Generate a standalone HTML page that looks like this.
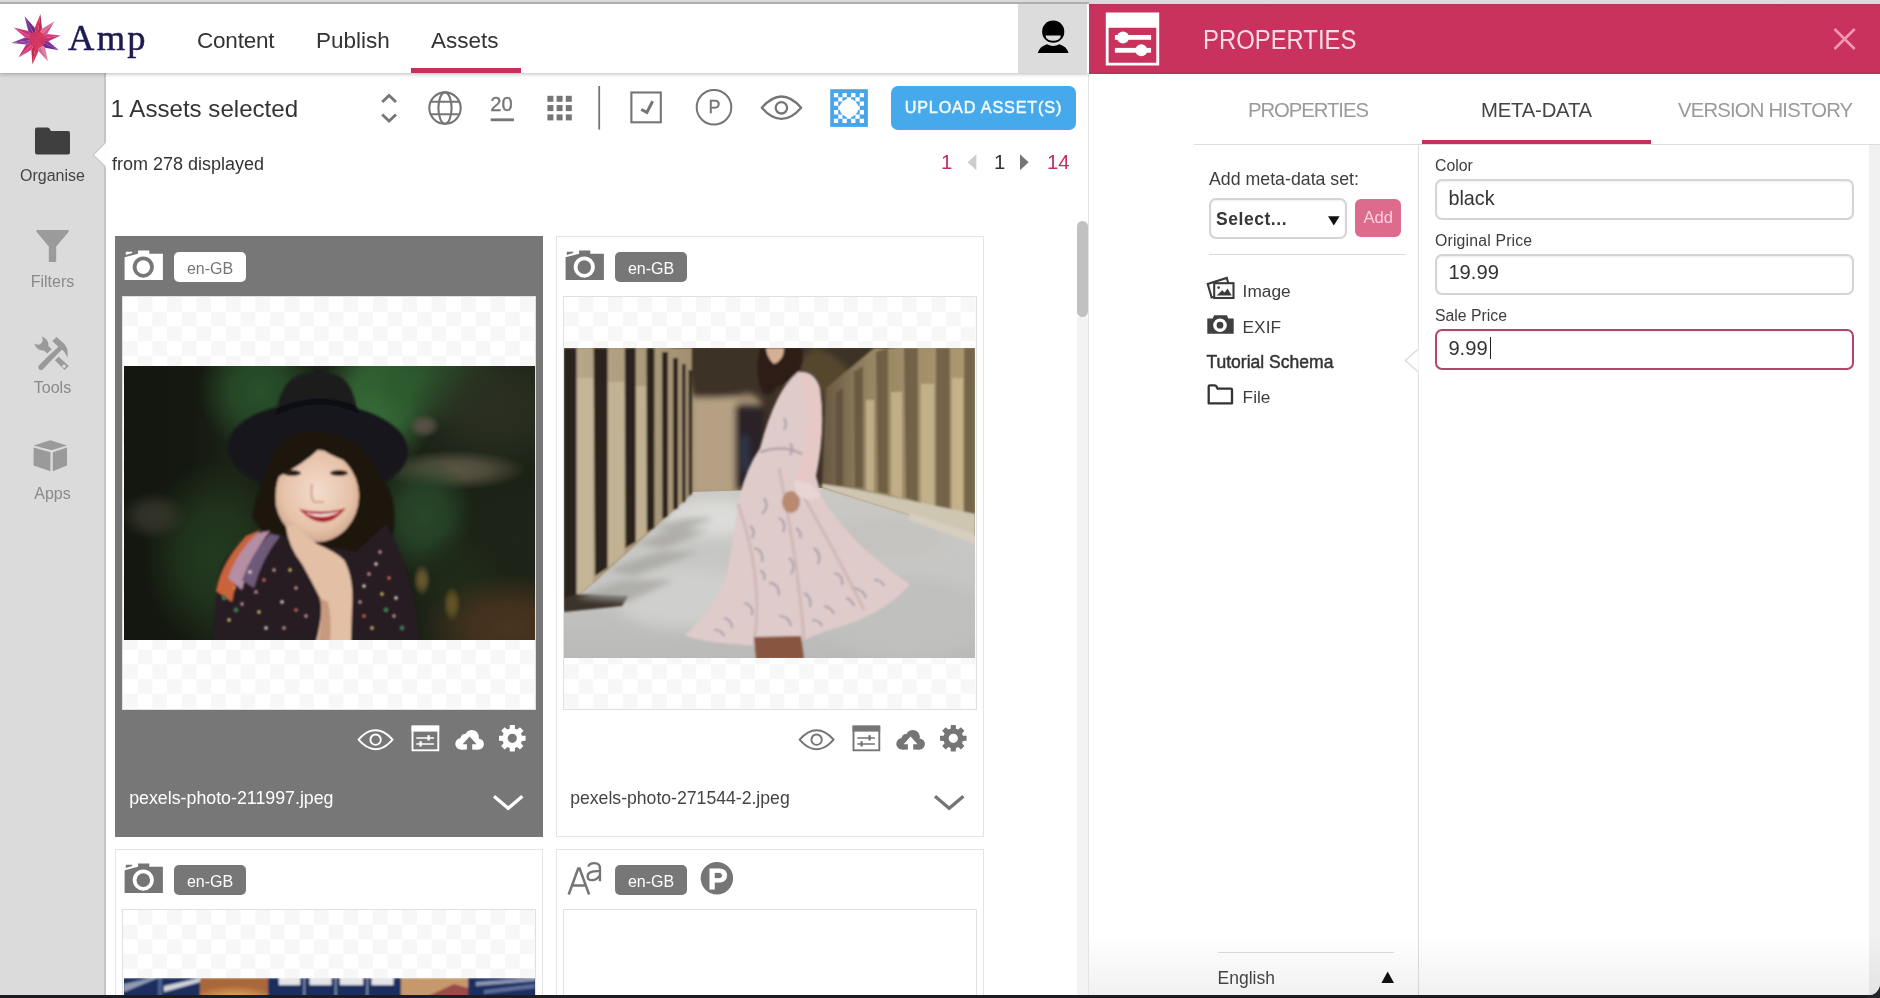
<!DOCTYPE html>
<html>
<head>
<meta charset="utf-8">
<title>Amp - Assets</title>
<style>
*{box-sizing:border-box;margin:0;padding:0}
html,body{width:1880px;height:998px;overflow:hidden;background:#fff}
body{font-family:"Liberation Sans",sans-serif;color:#333;position:relative}
#hdr,#sb,#tb,#cards,#pp{will-change:transform}
.abs{position:absolute}
.t{position:absolute;white-space:nowrap;line-height:1}
svg{position:absolute;overflow:visible}
/* top strip */
#topstrip{left:0;top:0;width:1880px;height:3.6px;background:#dadada;z-index:20}
#topline{left:0;top:2px;width:1089px;height:1.6px;background:#adadb1;z-index:21}
/* header */
#header{left:0;top:4px;width:1089px;height:69px;background:#fff;box-shadow:0 1px 4px rgba(0,0,0,.28);z-index:5}
#userbox{left:1018px;top:4px;width:68.6px;height:69px;background:#dddcdd;z-index:6}
#navline{left:411px;top:68px;width:110px;height:5px;background:#c7305b;z-index:7}
/* sidebar */
#sidebar{left:0;top:73px;width:106px;height:925px;background:#dcdbdc;border-right:2px solid #c4c4c6;box-shadow:1px 0 0 #ececec}
.sblabel{font-size:16px;color:#8a8a8a;text-align:center;width:105px;left:0}
/* main */
#main{left:106px;top:73px;width:983px;height:925px;background:#fff}
/* properties */
#phead{left:1088.6px;top:3.5px;width:792px;height:70px;background:linear-gradient(to bottom,#a93a5e 0,#c8325c 2.5px,#c8325c 67px,#b93159 70px);z-index:6}
#ppanel{left:1088.2px;top:74px;width:792px;height:924px;background:#fff;border-left:1.8px solid #e3e3e3}
/* bottom strip */
#botstrip{left:0;top:995px;width:1880px;height:3px;background:#1c1c22;z-index:50}
.card{position:absolute;width:428px;height:601px;overflow:hidden;background:#fff;border:1px solid #e4e4e4}
.card.sel{background:#777;border-color:#777}
.thumb{position:absolute;left:6px;top:59px;width:414px;height:414px;border:1px solid #e0e0e0;
 background-color:#fff;
 background-image:linear-gradient(45deg,#f7f7f7 25%,transparent 25%,transparent 75%,#f7f7f7 75%),linear-gradient(45deg,#f7f7f7 25%,transparent 25%,transparent 75%,#f7f7f7 75%);
 background-size:29.4px 29.4px;background-position:0 0,14.7px 14.7px}
.badge{position:absolute;height:29.6px;border-radius:5px;font-size:16px;line-height:33.6px;overflow:hidden;text-align:center;width:71.8px}
.inp{position:absolute;left:1435px;width:419px;height:41px;border:2px solid #d4d4d4;border-radius:7px;background:#fff;box-shadow:inset 0 1px 2px rgba(0,0,0,.08)}
</style>
</head>
<body>
<div id="topstrip" class="abs"></div><div id="topline" class="abs"></div>
<div id="sidebar" class="abs"></div>
<div id="main" class="abs"></div>
<div id="header" class="abs"></div>
<div id="userbox" class="abs"></div>
<div id="navline" class="abs"></div>
<div id="phead" class="abs"></div>
<div id="ppanel" class="abs"></div>

<!-- HEADER CONTENT -->
<div id="hdr" class="abs" style="left:0;top:0;z-index:10">
<svg width="80" height="74" style="left:0;top:0">
<polygon points="13.6,27.5 25.1,37.4 36.7,39.4" fill="#e03c80"/>
<polygon points="13.6,27.5 28.3,31.1 36.7,39.4" fill="#c53470"/>
<polygon points="24.5,16.3 28.3,31.1 36.7,39.4" fill="#7b2f98"/>
<polygon points="24.5,16.3 34.7,27.8 36.7,39.4" fill="#6c2985"/>
<polygon points="40.5,14.1 34.7,27.8 36.7,39.4" fill="#d6325e"/>
<polygon points="40.5,14.1 42.0,28.8 36.7,39.4" fill="#bc2c52"/>
<polygon points="54.3,21.5 42.0,28.8 36.7,39.4" fill="#e4669a"/>
<polygon points="54.3,21.5 47.2,34.0 36.7,39.4" fill="#c85987"/>
<polygon points="60.7,35.6 47.2,34.0 36.7,39.4" fill="#e03a7e"/>
<polygon points="60.7,35.6 48.4,41.2 36.7,39.4" fill="#c5336e"/>
<polygon points="58.8,50.3 48.4,41.2 36.7,39.4" fill="#7f2e9b"/>
<polygon points="58.8,50.3 45.1,47.7 36.7,39.4" fill="#6f2888"/>
<polygon points="47.9,61.2 45.1,47.7 36.7,39.4" fill="#e77aa6"/>
<polygon points="47.9,61.2 38.5,51.1 36.7,39.4" fill="#cb6b92"/>
<polygon points="32.5,64.4 38.5,51.1 36.7,39.4" fill="#d8325c"/>
<polygon points="32.5,64.4 31.3,49.9 36.7,39.4" fill="#be2c50"/>
<polygon points="18.4,57.4 31.3,49.9 36.7,39.4" fill="#e23b7f"/>
<polygon points="18.4,57.4 26.1,44.6 36.7,39.4" fill="#c6336f"/>
<polygon points="11.4,42.9 26.1,44.6 36.7,39.4" fill="#9240a6"/>
<polygon points="11.4,42.9 25.1,37.4 36.7,39.4" fill="#803892"/>
<circle cx="37.2" cy="39.6" r="8.2" fill="#d5335c" opacity=".9"/>
</svg>
<svg width="71" height="70" style="left:1018px;top:4px" viewBox="1018 4 71 70">
<circle cx="1053.2" cy="31.7" r="11.1" fill="#000"/>
<path d="M1045.5,35.5 A7.7,5.3 0 0 0 1060.9,35.5 Z" fill="#dddcdd"/>
<path d="M1037.7,53 Q1039.5,46.5 1047,44.2 Q1053.2,47.6 1059.4,44.2 Q1066.9,46.5 1068.5,53 Z" fill="#000"/>
</svg>
<svg width="60" height="60" style="left:1100px;top:8px" viewBox="1100 8 60 60">
<path fill-rule="evenodd" fill="#fff" d="M1105.8,12.5 H1159.2 V65.5 H1105.8 Z M1108.6,27.7 V62.7 H1156.3 V27.7 Z"/>
<rect x="1114.9" y="35" width="36.2" height="4.8" fill="#fff"/>
<circle cx="1123" cy="37.4" r="6" fill="#fff"/>
<rect x="1114.9" y="47.9" width="36.2" height="4.8" fill="#fff"/>
<circle cx="1141.3" cy="50.3" r="6" fill="#fff"/>
</svg>
<svg width="30" height="30" style="left:1830px;top:24px" viewBox="1830 24 30 30">
<path d="M1834.5,29 L1854.7,49 M1854.7,29 L1834.5,49" stroke="#f497b4" stroke-width="2.6" fill="none"/>
</svg>
<div class="t" style="left:68px;top:20px;font-family:'Liberation Serif',serif;font-size:36.5px;letter-spacing:2.3px;color:#1d1b50;-webkit-text-stroke:0.5px #1d1b50">Amp</div>
<div class="t" style="left:197px;top:30px;font-size:22.5px;letter-spacing:-0.2px;color:#333">Content</div>
<div class="t" style="left:316px;top:30px;font-size:22.5px;color:#333">Publish</div>
<div class="t" style="left:431px;top:30px;font-size:22.5px;color:#333">Assets</div>
<div class="t" style="left:1203px;top:27.3px;font-size:27px;color:#f6dde5;transform:scaleX(0.884);transform-origin:0 0">PROPERTIES</div>
</div>

<!-- SIDEBAR CONTENT -->
<div id="sb" class="abs" style="left:0;top:0;z-index:4">
<svg width="106" height="440" style="left:0;top:110px" viewBox="0 110 106 440">
<!-- folder -->
<path d="M37,127.6 H47.5 Q49.3,127.6 50,129.2 L50.8,131 H68 Q70,131 70,133 V152.6 Q70,154.6 68,154.6 H37 Q35,154.6 35,152.6 V129.6 Q35,127.6 37,127.6 Z" fill="#3f3f3f"/>
<!-- notch -->
<polygon points="106.5,141.5 93.3,154.8 106.5,168" fill="#fff" stroke="#c8c8ca" stroke-width="1.2"/><rect x="105.8" y="141" width="2" height="28" fill="#fff"/>
<!-- funnel -->
<path d="M37.8,230 H67.4 Q70,230 68.3,232.2 L56.2,246.5 V262 H48.8 V246.5 L36.8,232.2 Q35.2,230 37.8,230 Z" fill="#9b9b9b"/>
<!-- tools -->
<g fill="#9a9a9a">
<path d="M41.6,336.3 Q49.2,339.4 48.4,346 L51.6,349.2 L47.2,353.6 L44,350.4 Q37.2,351.4 34.2,343.6 Q38.4,346 41.2,343.2 Q44,340.4 41.6,336.3 Z"/>
<polygon points="54.9,360.2 58.7,356.7 68.8,366 64.5,370"/>
<path d="M39,365.2 L47.5,356.8 L59.8,345.6 L63,348.6 L51.6,360.2 L43,369.2 Q40.8,371 39,369.2 Q37.2,367.2 39,365.2 Z"/>
<path d="M52.3,341 L56.6,336.9 L62.5,342.2 Q69.5,347.5 67.2,358 Q65.6,352.2 61.8,349.6 L58,346.6 Z"/>
</g>
<circle cx="64" cy="366.2" r="1.7" fill="#dcdbdc"/>
<!-- cube -->
<g fill="#9a9a9a">
<polygon points="50.2,440.3 67,445.4 51.6,450.2 33.6,445.4"/>
<polygon points="33.6,447.4 50.4,452.2 50.4,471.2 33.6,465.4"/>
<polygon points="52.8,452.2 67,447.4 67,465.4 52.8,471.2"/>
</g>
</svg>
<div class="t sblabel" style="top:168px;color:#444">Organise</div>
<div class="t sblabel" style="top:273.5px">Filters</div>
<div class="t sblabel" style="top:379.5px">Tools</div>
<div class="t sblabel" style="top:485.5px">Apps</div>
</div>

<!-- MAIN TOOLBAR -->
<div id="tb" class="abs" style="left:0;top:0;z-index:3">
<div class="t" style="left:110.6px;top:97px;font-size:24.1px;color:#333">1 Assets selected</div>
<div class="t" style="left:112px;top:155.2px;font-size:18px;color:#333">from 278 displayed</div>
<svg width="520" height="60" style="left:370px;top:80px" viewBox="370 80 520 60">
<g fill="none" stroke="#757575">
<path d="M382.2,101.9 L389.1,95.4 L396,101.9" stroke-width="2.8"/>
<path d="M382.2,114.5 L389.1,121 L396,114.5" stroke-width="2.8"/>
<circle cx="445" cy="108.1" r="15.7" stroke-width="2.1"/>
<ellipse cx="445" cy="108.1" rx="6.6" ry="15.7" stroke-width="2.1"/>
<path d="M431,101.8 H459 M431,114.2 H459" stroke-width="2.1"/>
<rect x="631.4" y="92.5" width="29.4" height="29.8" stroke-width="2.1"/>
<path d="M641.3,109.5 L646.9,112.4 L652.6,101.2" stroke-width="3"/>
<circle cx="714" cy="107.2" r="17.3" stroke-width="2"/>
<path d="M761.8,107.7 C769,99.5 775.5,96.5 781.5,96.5 C787.5,96.5 794,99.5 801.2,107.7 C794,115.9 787.5,118.9 781.5,118.9 C775.5,118.9 769,115.9 761.8,107.7 Z" stroke-width="2.3" stroke-linejoin="round"/>
<circle cx="781.4" cy="107.8" r="5.7" stroke-width="2.3"/>
</g>
<g fill="#757575">
<rect x="490.7" y="118.4" width="23.2" height="2.8"/>
<rect x="547.4" y="95.8" width="6" height="6"/><rect x="556.6" y="95.8" width="6" height="6"/><rect x="565.8" y="95.8" width="6" height="6"/>
<rect x="547.4" y="105.1" width="6" height="6"/><rect x="556.6" y="105.1" width="6" height="6"/><rect x="565.8" y="105.1" width="6" height="6"/>
<rect x="547.4" y="114.4" width="6" height="6"/><rect x="556.6" y="114.4" width="6" height="6"/><rect x="565.8" y="114.4" width="6" height="6"/>
<rect x="598.3" y="86" width="1.8" height="43.6"/>
</g>
<rect x="830.2" y="89.2" width="37.7" height="37.7" fill="#47a5e8"/>
<path d="M833.9,92.9h4.3v4.3h-4.3zM842.5,92.9h4.3v4.3h-4.3zM851.1,92.9h4.3v4.3h-4.3zM859.7,92.9h4.3v4.3h-4.3zM838.2,97.2h4.3v4.3h-4.3zM846.8,97.2h4.3v4.3h-4.3zM855.4,97.2h4.3v4.3h-4.3zM833.9,101.5h4.3v4.3h-4.3zM842.5,101.5h4.3v4.3h-4.3zM851.1,101.5h4.3v4.3h-4.3zM859.7,101.5h4.3v4.3h-4.3zM838.2,105.8h4.3v4.3h-4.3zM846.8,105.8h4.3v4.3h-4.3zM855.4,105.8h4.3v4.3h-4.3zM833.9,110.1h4.3v4.3h-4.3zM842.5,110.1h4.3v4.3h-4.3zM851.1,110.1h4.3v4.3h-4.3zM859.7,110.1h4.3v4.3h-4.3zM838.2,114.4h4.3v4.3h-4.3zM846.8,114.4h4.3v4.3h-4.3zM855.4,114.4h4.3v4.3h-4.3zM833.9,118.7h4.3v4.3h-4.3zM842.5,118.7h4.3v4.3h-4.3zM851.1,118.7h4.3v4.3h-4.3zM859.7,118.7h4.3v4.3h-4.3z" fill="#fff"/>
<circle cx="849" cy="108" r="9.3" fill="#fff"/>
</svg>
<div class="t" style="left:490.2px;top:93.5px;font-size:20.2px;color:#757575;-webkit-text-stroke:0.35px #757575">20</div>
<div class="t" style="left:708.4px;top:98.4px;font-size:18px;color:#757575;-webkit-text-stroke:0.3px #757575">P</div>
<div class="t" style="left:940.9px;top:152.3px;font-size:20.4px;color:#c4305c">1</div>
<div class="t" style="left:993.9px;top:152.3px;font-size:20.4px;color:#333">1</div>
<div class="t" style="left:1046.8999999999999px;top:152.3px;font-size:20.4px;color:#c4305c">14</div>
<svg width="70" height="20" style="left:965px;top:152px" viewBox="965 152 70 20"><polygon points="967.6,162.2 976.4,154.2 976.4,170.2" fill="#cdcdcd"/><polygon points="1028.6,162.2 1020,154.2 1020,170.2" fill="#757575"/></svg>
<div class="abs" style="left:1077px;top:317px;width:11px;height:680px;background:#f3f3f3"></div>
<div class="abs" style="left:1077px;top:221px;width:10.6px;height:96px;border-radius:5.3px;background:#c1c1c1"></div>
<div class="abs" style="left:891px;top:86px;width:185.2px;height:44px;background:#45a9ec;border-radius:7px"></div>
<div class="t" style="left:890px;top:99px;width:186px;text-align:center;font-size:16.2px;font-weight:normal;-webkit-text-stroke:0.5px #f4fbff;letter-spacing:0.85px;text-indent:0.85px;color:#f4fbff">UPLOAD ASSET(S)</div>
</div>

<!-- CARDS -->
<div id="cards" class="abs" style="left:0;top:0;z-index:2">
<div class="card sel" style="left:115px;top:236px;height:600.5px">
<div class="thumb"></div>
<svg width="411" height="274" viewBox="0 0 411 274" style="left:7.5px;top:128.7px;overflow:hidden">
<defs>
<filter id="b1" x="-20%" y="-20%" width="140%" height="140%"><feGaussianBlur stdDeviation="11"/></filter>
<filter id="b2" x="-20%" y="-20%" width="140%" height="140%"><feGaussianBlur stdDeviation="1.3"/></filter>
<filter id="b3" x="-20%" y="-20%" width="140%" height="140%"><feGaussianBlur stdDeviation="0.8"/></filter>
<filter id="b4" x="-20%" y="-20%" width="140%" height="140%"><feGaussianBlur stdDeviation="4"/></filter>
<clipPath id="c1"><rect width="411" height="274"/></clipPath>
<radialGradient id="sk" cx="0.5" cy="0.45" r="0.6"><stop offset="0" stop-color="#f4dccd"/><stop offset="0.7" stop-color="#e5c1a8"/><stop offset="1" stop-color="#c99f86"/></radialGradient>
<linearGradient id="lg0" x1="0" y1="0" x2="1" y2="0"><stop offset="0" stop-color="#14170f"/><stop offset="0.6" stop-color="#14170f" stop-opacity=".9"/><stop offset="1" stop-color="#14170f" stop-opacity="0"/></linearGradient>
<radialGradient id="rg0"><stop offset="0" stop-color="#22391f"/><stop offset="0.45" stop-color="#22391f" stop-opacity=".8"/><stop offset="1" stop-color="#22391f" stop-opacity="0"/></radialGradient>
<radialGradient id="rg1"><stop offset="0" stop-color="#28502a"/><stop offset="0.45" stop-color="#28502a" stop-opacity=".8"/><stop offset="1" stop-color="#28502a" stop-opacity="0"/></radialGradient>
<radialGradient id="rg2"><stop offset="0" stop-color="#38703a"/><stop offset="0.45" stop-color="#38703a" stop-opacity=".8"/><stop offset="1" stop-color="#38703a" stop-opacity="0"/></radialGradient>
<radialGradient id="rg3"><stop offset="0" stop-color="#2c5a2e"/><stop offset="0.45" stop-color="#2c5a2e" stop-opacity=".8"/><stop offset="1" stop-color="#2c5a2e" stop-opacity="0"/></radialGradient>
<radialGradient id="rg4"><stop offset="0" stop-color="#2a2f21"/><stop offset="0.45" stop-color="#2a2f21" stop-opacity=".8"/><stop offset="1" stop-color="#2a2f21" stop-opacity="0"/></radialGradient>
<radialGradient id="rg5"><stop offset="0" stop-color="#5c5644"/><stop offset="0.45" stop-color="#5c5644" stop-opacity=".8"/><stop offset="1" stop-color="#5c5644" stop-opacity="0"/></radialGradient>
<radialGradient id="rg6"><stop offset="0" stop-color="#27472a"/><stop offset="0.45" stop-color="#27472a" stop-opacity=".8"/><stop offset="1" stop-color="#27472a" stop-opacity="0"/></radialGradient>
<radialGradient id="rg7"><stop offset="0" stop-color="#1e2418"/><stop offset="0.45" stop-color="#1e2418" stop-opacity=".8"/><stop offset="1" stop-color="#1e2418" stop-opacity="0"/></radialGradient>
<radialGradient id="rg8"><stop offset="0" stop-color="#1f2a18"/><stop offset="0.45" stop-color="#1f2a18" stop-opacity=".8"/><stop offset="1" stop-color="#1f2a18" stop-opacity="0"/></radialGradient>
<radialGradient id="rg9"><stop offset="0" stop-color="#4a341f"/><stop offset="0.45" stop-color="#4a341f" stop-opacity=".8"/><stop offset="1" stop-color="#4a341f" stop-opacity="0"/></radialGradient>
<radialGradient id="rg10"><stop offset="0" stop-color="#34352a"/><stop offset="0.45" stop-color="#34352a" stop-opacity=".8"/><stop offset="1" stop-color="#34352a" stop-opacity="0"/></radialGradient>
<radialGradient id="rg11"><stop offset="0" stop-color="#6b5a2e"/><stop offset="0.45" stop-color="#6b5a2e" stop-opacity=".8"/><stop offset="1" stop-color="#6b5a2e" stop-opacity="0"/></radialGradient>
<radialGradient id="rg12"><stop offset="0" stop-color="#665526"/><stop offset="0.45" stop-color="#665526" stop-opacity=".8"/><stop offset="1" stop-color="#665526" stop-opacity="0"/></radialGradient>
<radialGradient id="rg13"><stop offset="0" stop-color="#5a5148"/><stop offset="0.45" stop-color="#5a5148" stop-opacity=".8"/><stop offset="1" stop-color="#5a5148" stop-opacity="0"/></radialGradient>
</defs>
<g clip-path="url(#c1)">
<rect width="411" height="274" fill="#1b2216"/>
<g>
<rect x="0" y="0" width="110" height="274" fill="url(#lg0)"/>
<ellipse cx="90" cy="190" rx="70" ry="95" fill="url(#rg0)"/>
<ellipse cx="135" cy="25" rx="60" ry="65" fill="url(#rg1)"/>
<ellipse cx="255" cy="35" rx="60" ry="70" fill="url(#rg2)"/>
<ellipse cx="300" cy="15" rx="80" ry="50" fill="url(#rg3)"/>
<ellipse cx="370" cy="40" rx="85" ry="70" fill="url(#rg4)"/>
<ellipse cx="330" cy="104" rx="72" ry="20" fill="url(#rg5)"/>
<ellipse cx="300" cy="150" rx="50" ry="62" fill="url(#rg6)"/>
<ellipse cx="395" cy="170" rx="65" ry="60" fill="url(#rg7)"/>
<ellipse cx="335" cy="215" rx="50" ry="50" fill="url(#rg8)"/>
<ellipse cx="385" cy="262" rx="90" ry="55" fill="url(#rg9)"/>
<ellipse cx="30" cy="150" rx="34" ry="24" fill="url(#rg10)"/>
<ellipse cx="298" cy="214" rx="9" ry="16" fill="url(#rg11)"/>
<ellipse cx="328" cy="238" rx="9" ry="18" fill="url(#rg12)"/>
<ellipse cx="300" cy="60" rx="16" ry="12" fill="url(#rg13)"/>
</g>
<g filter="url(#b2)">
<!-- hat brim + crown -->
<ellipse cx="194" cy="83" rx="90" ry="46" fill="#17171a" transform="rotate(2 194 83)"/>
<path d="M152,46 Q158,14 176,9 Q194,4 212,9 Q228,14 233,44 Q194,30 152,46 Z" fill="#1b1b1f"/>
<path d="M150,50 Q194,28 236,48 L232,40 Q194,24 154,42 Z" fill="#0f0f12"/>
<!-- hair back -->
<path d="M150,84 Q132,130 128,150 Q140,172 160,178 L232,190 Q262,182 270,165 Q272,130 262,120 Q250,95 240,85 Z" fill="#1c1311"/>
<!-- clothes -->
<path d="M90,274 Q90,215 100,196 Q118,170 140,164 L180,176 L232,186 L262,158 Q280,190 290,235 L296,274 Z" fill="#261c24"/>
<path d="M92,225 Q98,196 122,170 L136,164 Q116,192 108,236 Z" fill="#c8643a"/>
<path d="M104,212 Q114,184 134,167 L146,165 Q126,190 118,224 Z" fill="#b48ea2"/>
<path d="M118,214 Q128,186 146,168 L156,170 Q138,192 130,222 Z" fill="#6e5a78"/>
<!-- face -->
<ellipse cx="193" cy="130" rx="42" ry="46" fill="url(#sk)"/>
<!-- bangs -->
<path d="M150,96 Q152,70 180,66 Q215,62 240,84 Q246,96 240,98 Q215,96 196,82 Q180,98 152,112 Z" fill="#1c1311"/>
<path d="M150,90 Q146,120 140,140 L152,150 Q150,120 156,104 Z" fill="#1c1311"/>
<path d="M236,92 Q246,120 244,150 L256,150 Q258,110 244,88 Z" fill="#1c1311"/>
<!-- eyes -->
<ellipse cx="168" cy="107" rx="9" ry="3" fill="#2a1a14"/><ellipse cx="215" cy="107" rx="9" ry="3" fill="#2a1a14"/>
<path d="M188,118 Q186,132 190,136 L200,136" stroke="#cfa48c" stroke-width="2" fill="none"/>
<!-- mouth -->
<path d="M175,143 Q198,149 222,142 Q200,170 175,143 Z" fill="#b01f28"/>
<path d="M180,146 Q198,151 217,145 Q198,156 180,146 Z" fill="#f4ede8"/>
<!-- hand -->
<path d="M162,160 Q170,158 177,165 L193,178 Q212,186 220,194 Q230,212 228,240 L227,276 L192,276 Q200,245 196,232 Q186,212 178,198 Q164,180 162,160 Z" fill="#e3bfa6"/>
<path d="M196,232 Q200,250 194,276 L206,276 Q208,250 204,236 Z" fill="#c79a80"/>
</g>
<g filter="url(#b3)">
<g fill="#d8a09a"><circle cx="118" cy="238" r="1.7"/><circle cx="132" cy="226" r="1.7"/><circle cx="150" cy="204" r="1.7"/><circle cx="172" cy="222" r="1.7"/><circle cx="182" cy="250" r="1.7"/><circle cx="245" cy="208" r="1.7"/><circle cx="270" cy="250" r="1.7"/><circle cx="236" cy="236" r="1.7"/><circle cx="256" cy="186" r="1.7"/><circle cx="160" cy="262" r="1.7"/></g>
<g fill="#e3cf6a"><circle cx="135" cy="246" r="1.7"/><circle cx="258" cy="228" r="1.7"/><circle cx="105" cy="254" r="1.7"/><circle cx="166" cy="204" r="1.7"/><circle cx="248" cy="262" r="1.7"/></g>
<g fill="#e8e4dc"><circle cx="158" cy="236" r="1.7"/><circle cx="252" cy="198" r="1.7"/><circle cx="142" cy="262" r="1.7"/><circle cx="240" cy="220" r="1.7"/><circle cx="272" cy="232" r="1.7"/><circle cx="126" cy="206" r="1.7"/></g>
<g fill="#de7454"><circle cx="140" cy="214" r="1.7"/><circle cx="240" cy="250" r="1.7"/><circle cx="265" cy="212" r="1.7"/><circle cx="172" cy="244" r="1.7"/><circle cx="110" cy="222" r="1.7"/></g>
<g fill="#3f7a52"><circle cx="112" cy="244" r="2.4"/><circle cx="100" cy="232" r="2.4"/><circle cx="262" cy="244" r="2.4"/><circle cx="278" cy="262" r="2.4"/></g>
</g>
</g>
</svg>

<svg width="428" height="600" style="left:-1px;top:-1px" viewBox="0 0 428 600">
<path fill="#fff" fill-rule="evenodd" d="M9.6,21.2 L23.1,17.8 V14.4 H34.3 V17.8 H47.9 V43.9 H9.6 Z M17.7,31.1 a10.6,10.6 0 1 0 21.2,0 a10.6,10.6 0 1 0 -21.2,0 Z M21.5,31.1 a6.8,6.8 0 1 0 13.6,0 a6.8,6.8 0 1 0 -13.6,0 Z"/>
<polygon fill="#fff" points="10.8,15.8 17.2,15.8 17.2,16.9 10.8,18.9"/>
<g fill="none" stroke="#fff">
<path d="M243.60000000000002,503.7 C249.60000000000002,496.7 255.10000000000002,494.2 260.6,494.2 C266.1,494.2 271.6,496.7 277.6,503.7 C271.6,510.7 266.1,513.2 260.6,513.2 C255.10000000000002,513.2 249.60000000000002,510.7 243.60000000000002,503.7 Z" stroke-width="1.9" stroke-linejoin="round"/>
<circle cx="260.6" cy="503.7" r="5.2" stroke-width="1.9"/>
<rect x="297.5" y="490.5" width="25.8" height="23.8" stroke-width="1.9"/>
<path d="M301.3,501.9 H318.9 M301.3,507.9 H318.9" stroke-width="1.5"/>
<path d="M313.6,499.2 V504.6 M305.6,505.2 V510.6" stroke-width="2.4"/>
<path d="M379,560.3 L393.2,572.3 L407.4,560.3" stroke-width="3.3" stroke="#fff"/>
</g>
<rect x="296.6" y="489.6" width="27.6" height="6" fill="#fff"/>
<g fill="#fff">
<circle cx="346.09999999999997" cy="507.79999999999995" r="5.8"/><circle cx="349.8" cy="502.5" r="4.4"/><circle cx="356.8" cy="501.0" r="7.1"/><circle cx="363.4" cy="508.09999999999997" r="5.5"/>
<rect x="346.09999999999997" y="503.9" width="17.3" height="9.7"/>
<path d="M394.63,492.66 L394.84,489.03 L399.76,489.03 L399.97,492.66 L402.22,493.60 L404.95,491.17 L408.43,494.65 L406.00,497.38 L406.94,499.63 L410.57,499.84 L410.57,504.76 L406.94,504.97 L406.00,507.22 L408.43,509.95 L404.95,513.43 L402.22,511.00 L399.97,511.94 L399.76,515.57 L394.84,515.57 L394.63,511.94 L392.38,511.00 L389.65,513.43 L386.17,509.95 L388.60,507.22 L387.66,504.97 L384.03,504.76 L384.03,499.84 L387.66,499.63 L388.60,497.38 L386.17,494.65 L389.65,491.17 L392.38,493.60Z M392.70,502.30 a4.6,4.6 0 1 0 9.2,0 a4.6,4.6 0 1 0 -9.2,0Z" fill-rule="evenodd"/>
</g>
<path fill="#777" d="M354.59999999999997,500.59999999999997 L361.59999999999997,508.29999999999995 H357.2 V513.9 H351.9 V508.29999999999995 H347.59999999999997 Z"/>

</svg>
<div class="badge" style="left:58.2px;top:15px;background:#fff;color:#777">en-GB</div>
<div class="t" style="left:13.2px;top:553.2px;font-size:17.8px;color:#fff">pexels-photo-211997.jpeg</div>
</div>
<div class="card" style="left:556px;top:236px;height:600.5px">
<div class="thumb"></div>
<svg width="411" height="310.5" viewBox="0 0 411 310.5" style="left:7px;top:110.6px;overflow:hidden">
<defs>
<filter id="p2a" x="-20%" y="-20%" width="140%" height="140%"><feGaussianBlur stdDeviation="7"/></filter>
<filter id="p2b" x="-20%" y="-20%" width="140%" height="140%"><feGaussianBlur stdDeviation="1.3"/></filter>
<filter id="p2c" x="-20%" y="-20%" width="140%" height="140%"><feGaussianBlur stdDeviation="0.8"/></filter>
<filter id="p2d" x="-20%" y="-20%" width="140%" height="140%"><feGaussianBlur stdDeviation="3"/></filter>
<linearGradient id="fl" x1="0" y1="0" x2="0" y2="1"><stop offset="0" stop-color="#c9c8c4"/><stop offset="0.5" stop-color="#c6c6c4"/><stop offset="1" stop-color="#b9b9b8"/></linearGradient>
<linearGradient id="rw" x1="0" y1="0" x2="1" y2="0"><stop offset="0" stop-color="#665741"/><stop offset="0.3" stop-color="#978462"/><stop offset="1" stop-color="#ae9a73"/></linearGradient>
<linearGradient id="lw" x1="0" y1="0" x2="1" y2="0"><stop offset="0" stop-color="#b9a98c"/><stop offset="1" stop-color="#a39072"/></linearGradient>
<clipPath id="c2"><rect width="411" height="310.5"/></clipPath>
</defs>
<g clip-path="url(#c2)">
<rect width="411" height="310.5" fill="#9d8c70"/>
<!-- ceiling dark -->
<g filter="url(#p2d)">
<path d="M100,-5 H330 L320,40 Q290,60 280,140 H200 L198,56 Q190,40 172,48 L130,52 L118,10 Z" fill="#3c3226"/>
<path d="M250,0 Q290,10 300,60 L300,140 L262,140 L262,60 Q255,30 230,20 Z" fill="#54462f"/>
<rect x="129" y="50" width="43" height="94" fill="#b5a083"/>
<rect x="171" y="58" width="29" height="84" fill="#2b2325"/>
<rect x="177" y="88" width="8" height="36" fill="#2f3548"/>
</g>
<!-- floor -->
<polygon points="0,262 128,144 258,140 411,188 411,311 0,311" fill="url(#fl)"/>
<g filter="url(#p2a)">
<ellipse cx="150" cy="170" rx="45" ry="18" fill="#dcdcda"/>
<ellipse cx="120" cy="250" rx="70" ry="30" fill="#cfcfcd"/>
<ellipse cx="340" cy="270" rx="80" ry="40" fill="#c0c0be"/>
<ellipse cx="320" cy="190" rx="60" ry="20" fill="#c4c3c0"/>
</g>
<g filter="url(#p2b)">
<!-- right wall -->
<polygon points="411,0 411,188 258,140 262,40 310,0" fill="url(#rw)"/>
<g fill="#564833" opacity=".62">
<polygon points="400,0 411,0 411,172 400,168"/>
<polygon points="372,0 386,0 386,164 372,160"/>
<polygon points="340,0 354,0 354,154 342,150"/>
<polygon points="312,4 324,0 324,146 314,144"/>
<polygon points="290,24 299,18 299,140 291,139"/>
<polygon points="272,45 279,40 279,138 272,138"/>
</g>
<g fill="#cdbb94" opacity=".75">
<polygon points="388,30 399,30 399,168 388,164"/>
<polygon points="357,36 370,36 370,160 357,156"/>
<polygon points="327,44 338,44 338,150 327,147"/>
<polygon points="302,52 310,52 310,144 302,142"/>
</g>
<polygon points="411,166 411,188 258,140 258,136 285,140" fill="#cfc6b2"/>
<polygon points="345,165 411,186 411,196 345,172" fill="#d6cfbf"/>
<!-- left columns -->
<polygon points="0,0 128,0 128,146 0,262" fill="url(#lw)"/>
<g fill="#d2c3a4" opacity=".55">
<polygon points="13,30 29,30 29,236 13,250"/><polygon points="44,34 60,34 60,206 44,220"/><polygon points="72,38 82,38 82,186 72,194"/>
</g>
<g fill="#2b241d">
<polygon points="0,0 12.5,0 12.5,252 0,262"/>
<polygon points="29.6,0 43.6,0 43.6,220 31,228"/>
<polygon points="60.8,0 71.7,0 71.7,194 61.5,200"/>
<polygon points="82.6,0 90.4,0 90.4,180 83,184"/>
<polygon points="98,4 104,4 104,168 98.4,171"/>
<polygon points="109,10 114,10 114,160 109.3,162"/>
<polygon points="118,16 121.5,16 121.5,153 118.2,155"/>
<polygon points="124.6,22 127.8,22 127.8,146 124.8,148"/>
</g>
<polygon points="0,250 12.5,246 64,248 58,258 0,264" fill="#3a332c"/>
</g>
<g filter="url(#p2d)" fill="#a3a29e" opacity=".7">
<polygon points="43,222 95,204 135,204 70,228"/>
<polygon points="71,196 110,182 145,182 100,200"/>
<polygon points="90,181 122,170 150,170 118,184"/>
<polygon points="12,250 60,232 110,232 64,254"/>
</g>
<g filter="url(#p2b)">
<!-- woman: hair -->
<path d="M196,0 Q190,26 198,44 Q206,50 212,40 Q226,34 236,22 Q240,10 238,0 Z" fill="#2d1f18"/>
<path d="M202,0 H220 Q220,12 210,16 Q203,10 202,0 Z" fill="#d6b096"/>
<!-- dress -->
<path d="M234,24 Q250,22 256,40 Q262,80 252,128 L258,150 Q290,200 346,236 Q320,268 265,282 L240,292 Q200,300 170,296 Q136,294 121,287 Q150,260 162,230 Q170,190 174,156 Q180,124 196,100 Q204,70 214,50 Q222,34 234,24 Z" fill="#dfcbca"/>
<path d="M236,28 Q256,28 258,62 Q258,100 248,134 Q240,140 232,132 Q244,92 242,62 Q240,42 236,28 Z" fill="#e6c8c6"/>
<path d="M196,104 Q220,96 238,106" stroke="#b5a0a4" stroke-width="2.5" fill="none"/>
<path d="M174,156 Q200,230 190,296 M215,120 Q235,220 240,292 M235,140 Q280,220 300,262" stroke="#d0b9b8" stroke-width="3" fill="none"/>
<!-- hand -->
<ellipse cx="227" cy="154" rx="9" ry="11" fill="#b88a72"/>
<path d="M230,132 Q250,134 256,148 Q246,156 232,146 Z" fill="#e8d4d1"/>
<!-- legs -->
<polygon points="190,289 237,288 240,311 192,311" fill="#87553f"/>
</g>
<g filter="url(#p2c)" stroke="#a39ca8" stroke-width="2.2" fill="none" opacity=".8">
<path d="M200,150 q6,8 -2,16 M215,170 q8,4 4,14 M190,200 q10,2 8,14 M225,210 q8,6 2,16 M205,235 q10,0 10,12 M250,200 q8,6 4,16 M270,225 q10,2 8,12 M240,245 q8,4 6,14 M180,255 q10,2 8,12 M215,268 q10,0 12,10 M290,240 q10,2 12,10 M160,270 q8,2 8,10 M260,258 q8,2 10,8 M310,232 q8,0 10,6 M220,70 q4,6 0,12 M226,95 q4,6 0,12 M196,222 q6,4 4,10 M232,180 q6,4 4,10 M282,250 q6,2 8,8 M150,282 q8,0 10,6 M248,272 q8,0 10,6 M186,178 q6,4 2,12"/>
</g>
</g>
</svg>

<svg width="428" height="600" style="left:-1px;top:-1px" viewBox="0 0 428 600">
<path fill="#757575" fill-rule="evenodd" d="M9.6,21.2 L23.1,17.8 V14.4 H34.3 V17.8 H47.9 V43.9 H9.6 Z M17.7,31.1 a10.6,10.6 0 1 0 21.2,0 a10.6,10.6 0 1 0 -21.2,0 Z M21.5,31.1 a6.8,6.8 0 1 0 13.6,0 a6.8,6.8 0 1 0 -13.6,0 Z"/>
<polygon fill="#757575" points="10.8,15.8 17.2,15.8 17.2,16.9 10.8,18.9"/>
<g fill="none" stroke="#757575">
<path d="M243.60000000000002,503.7 C249.60000000000002,496.7 255.10000000000002,494.2 260.6,494.2 C266.1,494.2 271.6,496.7 277.6,503.7 C271.6,510.7 266.1,513.2 260.6,513.2 C255.10000000000002,513.2 249.60000000000002,510.7 243.60000000000002,503.7 Z" stroke-width="1.9" stroke-linejoin="round"/>
<circle cx="260.6" cy="503.7" r="5.2" stroke-width="1.9"/>
<rect x="297.5" y="490.5" width="25.8" height="23.8" stroke-width="1.9"/>
<path d="M301.3,501.9 H318.9 M301.3,507.9 H318.9" stroke-width="1.5"/>
<path d="M313.6,499.2 V504.6 M305.6,505.2 V510.6" stroke-width="2.4"/>
<path d="M379,560.3 L393.2,572.3 L407.4,560.3" stroke-width="3.3" stroke="#757575"/>
</g>
<rect x="296.6" y="489.6" width="27.6" height="6" fill="#757575"/>
<g fill="#757575">
<circle cx="346.09999999999997" cy="507.79999999999995" r="5.8"/><circle cx="349.8" cy="502.5" r="4.4"/><circle cx="356.8" cy="501.0" r="7.1"/><circle cx="363.4" cy="508.09999999999997" r="5.5"/>
<rect x="346.09999999999997" y="503.9" width="17.3" height="9.7"/>
<path d="M394.63,492.66 L394.84,489.03 L399.76,489.03 L399.97,492.66 L402.22,493.60 L404.95,491.17 L408.43,494.65 L406.00,497.38 L406.94,499.63 L410.57,499.84 L410.57,504.76 L406.94,504.97 L406.00,507.22 L408.43,509.95 L404.95,513.43 L402.22,511.00 L399.97,511.94 L399.76,515.57 L394.84,515.57 L394.63,511.94 L392.38,511.00 L389.65,513.43 L386.17,509.95 L388.60,507.22 L387.66,504.97 L384.03,504.76 L384.03,499.84 L387.66,499.63 L388.60,497.38 L386.17,494.65 L389.65,491.17 L392.38,493.60Z M392.70,502.30 a4.6,4.6 0 1 0 9.2,0 a4.6,4.6 0 1 0 -9.2,0Z" fill-rule="evenodd"/>
</g>
<path fill="#fff" d="M354.59999999999997,500.59999999999997 L361.59999999999997,508.29999999999995 H357.2 V513.9 H351.9 V508.29999999999995 H347.59999999999997 Z"/>

</svg>
<div class="badge" style="left:58.2px;top:15px;background:#777;color:#fff">en-GB</div>
<div class="t" style="left:13.2px;top:553.2px;font-size:17.64px;color:#444">pexels-photo-271544-2.jpeg</div>
</div>
<div class="card" style="left:115px;top:849px;height:200px">
<div class="thumb"></div>
<svg width="411" height="22" viewBox="0 0 411 22" style="left:7.5px;top:127.5px;overflow:hidden">
<defs><filter id="p3" x="-5%" y="-50%" width="110%" height="200%"><feGaussianBlur stdDeviation="0.9"/></filter>
<radialGradient id="lamp" cx="0.5" cy="1" r="0.7"><stop offset="0" stop-color="#ffe9a8"/><stop offset="0.35" stop-color="#e9a55c"/><stop offset="1" stop-color="#a9683a"/></radialGradient></defs>
<g filter="url(#p3)">
<rect x="-5" y="0" width="421" height="25" fill="#1c2d5f"/>
<polygon points="0,6 28,0 34,0 0,14" fill="#8f9bb5"/>
<polygon points="34,0 38,0 38,20 34,20" fill="#4a5f93"/>
<polygon points="40,8 76,0 76,4 40,14" fill="#cfd3dc"/>
<rect x="76" y="0" width="68" height="25" fill="url(#lamp)"/>
<rect x="155" y="0" width="21" height="7" fill="#e4e6ea"/><rect x="185.5" y="0" width="22" height="7" fill="#e4e6ea"/><rect x="216" y="0" width="23" height="7" fill="#e4e6ea"/><rect x="247.5" y="0" width="22" height="7" fill="#e4e6ea"/>
<rect x="179.5" y="0" width="1.5" height="20" fill="#8d99b8"/><rect x="211" y="0" width="1.5" height="20" fill="#8d99b8"/><rect x="242.5" y="0" width="1.5" height="20" fill="#8d99b8"/>
<rect x="277" y="0" width="67" height="25" fill="#c6996c"/>
<polygon points="300,20 330,6 344,10 344,20" fill="#9c4a4a"/>
<polygon points="352,4 411,0 411,3 352,8" fill="#8e9ab6"/><polygon points="360,12 411,6 411,10 360,16" fill="#5d6d9c"/>
</g>
</svg>

<svg width="428" height="600" style="left:-1px;top:-1px" viewBox="0 0 428 600">
<path fill="#757575" fill-rule="evenodd" d="M9.6,21.2 L23.1,17.8 V14.4 H34.3 V17.8 H47.9 V43.9 H9.6 Z M17.7,31.1 a10.6,10.6 0 1 0 21.2,0 a10.6,10.6 0 1 0 -21.2,0 Z M21.5,31.1 a6.8,6.8 0 1 0 13.6,0 a6.8,6.8 0 1 0 -13.6,0 Z"/>
<polygon fill="#757575" points="10.8,15.8 17.2,15.8 17.2,16.9 10.8,18.9"/>
<g fill="none" stroke="#757575">
<path d="M243.60000000000002,503.7 C249.60000000000002,496.7 255.10000000000002,494.2 260.6,494.2 C266.1,494.2 271.6,496.7 277.6,503.7 C271.6,510.7 266.1,513.2 260.6,513.2 C255.10000000000002,513.2 249.60000000000002,510.7 243.60000000000002,503.7 Z" stroke-width="1.9" stroke-linejoin="round"/>
<circle cx="260.6" cy="503.7" r="5.2" stroke-width="1.9"/>
<rect x="297.5" y="490.5" width="25.8" height="23.8" stroke-width="1.9"/>
<path d="M301.3,501.9 H318.9 M301.3,507.9 H318.9" stroke-width="1.5"/>
<path d="M313.6,499.2 V504.6 M305.6,505.2 V510.6" stroke-width="2.4"/>
<path d="M379,560.3 L393.2,572.3 L407.4,560.3" stroke-width="3.3" stroke="#757575"/>
</g>
<rect x="296.6" y="489.6" width="27.6" height="6" fill="#757575"/>
<g fill="#757575">
<circle cx="346.09999999999997" cy="507.79999999999995" r="5.8"/><circle cx="349.8" cy="502.5" r="4.4"/><circle cx="356.8" cy="501.0" r="7.1"/><circle cx="363.4" cy="508.09999999999997" r="5.5"/>
<rect x="346.09999999999997" y="503.9" width="17.3" height="9.7"/>
<path d="M394.63,492.66 L394.84,489.03 L399.76,489.03 L399.97,492.66 L402.22,493.60 L404.95,491.17 L408.43,494.65 L406.00,497.38 L406.94,499.63 L410.57,499.84 L410.57,504.76 L406.94,504.97 L406.00,507.22 L408.43,509.95 L404.95,513.43 L402.22,511.00 L399.97,511.94 L399.76,515.57 L394.84,515.57 L394.63,511.94 L392.38,511.00 L389.65,513.43 L386.17,509.95 L388.60,507.22 L387.66,504.97 L384.03,504.76 L384.03,499.84 L387.66,499.63 L388.60,497.38 L386.17,494.65 L389.65,491.17 L392.38,493.60Z M392.70,502.30 a4.6,4.6 0 1 0 9.2,0 a4.6,4.6 0 1 0 -9.2,0Z" fill-rule="evenodd"/>
</g>
<path fill="#fff" d="M354.59999999999997,500.59999999999997 L361.59999999999997,508.29999999999995 H357.2 V513.9 H351.9 V508.29999999999995 H347.59999999999997 Z"/>

</svg>
<div class="badge" style="left:58.2px;top:15px;background:#777;color:#fff">en-GB</div>
<div class="t" style="left:13.2px;top:553.2px;font-size:17.8px;color:#444"></div>
</div>
<div class="card" style="left:556px;top:849px;height:200px">
<div class="thumb" style="background:#fff"></div>

<svg width="428" height="600" style="left:-1px;top:-1px" viewBox="0 0 428 600">
<g fill="none" stroke="#757575">
<path d="M12.7,45.5 L22.2,19.6 L23.6,19.6 L33.1,45.5 M16.2,36.6 H29.6" stroke-width="2.5"/>
<path d="M32.2,17.6 Q33.4,14.1 38.4,14.1 Q44,14.1 44,19.6 V32.2 M44,22.2 Q31.6,21.6 31.6,27.2 Q31.6,31.2 36,31.2 Q40.8,31.2 44,26.4" stroke-width="2.3"/>
</g>
<g fill="none" stroke="#757575">
<path d="M243.60000000000002,503.7 C249.60000000000002,496.7 255.10000000000002,494.2 260.6,494.2 C266.1,494.2 271.6,496.7 277.6,503.7 C271.6,510.7 266.1,513.2 260.6,513.2 C255.10000000000002,513.2 249.60000000000002,510.7 243.60000000000002,503.7 Z" stroke-width="1.9" stroke-linejoin="round"/>
<circle cx="260.6" cy="503.7" r="5.2" stroke-width="1.9"/>
<rect x="297.5" y="490.5" width="25.8" height="23.8" stroke-width="1.9"/>
<path d="M301.3,501.9 H318.9 M301.3,507.9 H318.9" stroke-width="1.5"/>
<path d="M313.6,499.2 V504.6 M305.6,505.2 V510.6" stroke-width="2.4"/>
<path d="M379,560.3 L393.2,572.3 L407.4,560.3" stroke-width="3.3" stroke="#757575"/>
</g>
<rect x="296.6" y="489.6" width="27.6" height="6" fill="#757575"/>
<g fill="#757575">
<circle cx="346.09999999999997" cy="507.79999999999995" r="5.8"/><circle cx="349.8" cy="502.5" r="4.4"/><circle cx="356.8" cy="501.0" r="7.1"/><circle cx="363.4" cy="508.09999999999997" r="5.5"/>
<rect x="346.09999999999997" y="503.9" width="17.3" height="9.7"/>
<path d="M394.63,492.66 L394.84,489.03 L399.76,489.03 L399.97,492.66 L402.22,493.60 L404.95,491.17 L408.43,494.65 L406.00,497.38 L406.94,499.63 L410.57,499.84 L410.57,504.76 L406.94,504.97 L406.00,507.22 L408.43,509.95 L404.95,513.43 L402.22,511.00 L399.97,511.94 L399.76,515.57 L394.84,515.57 L394.63,511.94 L392.38,511.00 L389.65,513.43 L386.17,509.95 L388.60,507.22 L387.66,504.97 L384.03,504.76 L384.03,499.84 L387.66,499.63 L388.60,497.38 L386.17,494.65 L389.65,491.17 L392.38,493.60Z M392.70,502.30 a4.6,4.6 0 1 0 9.2,0 a4.6,4.6 0 1 0 -9.2,0Z" fill-rule="evenodd"/>
</g>
<path fill="#fff" d="M354.59999999999997,500.59999999999997 L361.59999999999997,508.29999999999995 H357.2 V513.9 H351.9 V508.29999999999995 H347.59999999999997 Z"/>
<circle cx="160.9" cy="29.2" r="16.2" fill="#757575"/>
<text x="152" y="40.4" font-family="Liberation Sans" font-weight="bold" font-size="29.5" fill="#fff" stroke="#fff" stroke-width="0.8">P</text>
</svg>
<div class="badge" style="left:58.2px;top:15px;background:#777;color:#fff">en-GB</div>
<div class="t" style="left:13.2px;top:553.2px;font-size:17.8px;color:#444"></div>
</div>
</div>

<!-- PROPERTIES PANEL CONTENT -->
<div id="pp" class="abs" style="left:0;top:0;z-index:8">
<!-- tabs -->
<div class="t" style="left:1248px;top:100px;font-size:20.3px;color:#9a9a9a;letter-spacing:-1.05px">PROPERTIES</div>
<div class="t" style="left:1476px;top:100px;font-size:20.3px;color:#444;width:121px;text-align:center;letter-spacing:-0.2px">META-DATA</div>
<div class="t" style="left:1678px;top:100px;font-size:20.3px;color:#9a9a9a;letter-spacing:-0.8px">VERSION HISTORY</div>
<div class="abs" style="left:1194px;top:143.5px;width:686px;height:1.5px;background:#dedede"></div>
<div class="abs" style="left:1422px;top:139.5px;width:228.5px;height:4.2px;background:#c7305b"></div>
<!-- vertical divider -->
<div class="abs" style="left:1417.5px;top:145px;width:1.5px;height:850px;background:#dedede"></div>
<svg width="20" height="30" style="left:1402px;top:346px" viewBox="1402 346 20 30"><polygon points="1419.2,348.3 1405.3,360.5 1419.2,372.7" fill="#fff" stroke="#dadada" stroke-width="1.3"/><rect x="1418.6" y="347" width="2" height="27" fill="#fff"/></svg>
<!-- right scrollbar track -->
<div class="abs" style="left:1868.5px;top:145px;width:11.5px;height:850px;background:#f1f1f1"></div>
<!-- left column -->
<div class="t" style="left:1209px;top:171px;font-size:17.75px;color:#3d3d3d">Add meta-data set:</div>
<div class="abs" style="left:1209px;top:198px;width:137.5px;height:40.5px;border:2px solid #d4d4d4;border-radius:7px;background:#fff;box-shadow:inset 0 1px 2px rgba(0,0,0,.07)"></div>
<div class="t" style="left:1216px;top:211.3px;font-size:17.5px;font-weight:bold;letter-spacing:0.55px;color:#363636">Select...</div>
<svg width="14" height="12" style="left:1327px;top:215px" viewBox="0 0 14 12"><polygon points="1,1.2 12.6,1.2 6.8,10.6" fill="#111"/></svg>
<div class="abs" style="left:1355.3px;top:199px;width:46px;height:38.3px;border-radius:6px;background:#dd6b8d"></div>
<div class="t" style="left:1355.3px;top:209.6px;width:46px;text-align:center;font-size:16.6px;color:#f9d3de">Add</div>
<div class="abs" style="left:1209px;top:253.8px;width:196.5px;height:1.7px;background:#dadada"></div>
<svg width="40" height="140" style="left:1200px;top:270px" viewBox="1200 270 40 140">
<!-- image icon -->
<g fill="none" stroke="#3a3a3a" stroke-width="2.1" stroke-linejoin="miter">
<rect x="1214.2" y="283.2" width="19.3" height="14.8"/>
<path d="M1214,296.8 L1211.6,297.4 L1207.7,283.9 L1226.8,277.9 L1228.2,283"/>
</g>
<path d="M1216.6,295.6 L1222.2,290.2 L1224.6,292.6 L1227.6,288.4 L1231.6,295.6 Z" fill="#3a3a3a"/>
<circle cx="1218.6" cy="287.6" r="1.3" fill="#3a3a3a"/>
<!-- camera -->
<path fill="#3f3f3f" fill-rule="evenodd" d="M1207.3,318.4 H1212.6 L1214.2,315.3 H1226.8 L1228.4,318.4 H1233.7 V333.8 H1207.3 Z M1213.2,325.2 a6.8,6.8 0 1 0 13.6,0 a6.8,6.8 0 1 0 -13.6,0 Z M1216.6,325.2 a3.4,3.4 0 1 0 6.8,0 a3.4,3.4 0 1 0 -6.8,0 Z"/>
<!-- folder outline -->
<path d="M1208.7,403.4 V386.6 Q1208.7,385.4 1209.9,385.4 H1214.8 Q1215.8,385.4 1216.4,386.4 L1217.6,388.6 H1230.8 Q1232,388.6 1232,389.8 V403.4 Z" fill="none" stroke="#333" stroke-width="2.3" stroke-linejoin="round"/>
</svg>
<div class="t" style="left:1242.6px;top:283.4px;font-size:17.3px;color:#3d3d3d">Image</div>
<div class="t" style="left:1242.6px;top:318.7px;font-size:17.3px;color:#3d3d3d">EXIF</div>
<div class="t" style="left:1206.4px;top:354.4px;font-size:17.55px;letter-spacing:0px;color:#333;-webkit-text-stroke:0.45px #333">Tutorial Schema</div>
<div class="t" style="left:1242.6px;top:389.4px;font-size:17.3px;color:#3d3d3d">File</div>
<!-- bottom language -->
<div class="abs" style="left:1089px;top:935px;width:791px;height:60px;background:linear-gradient(to bottom,rgba(255,255,255,0),rgba(0,0,0,.055))"></div>
<div class="abs" style="left:1217.5px;top:951.5px;width:176.5px;height:1.3px;background:#d6d6d6"></div>
<div class="t" style="left:1217.5px;top:969.5px;font-size:17.5px;color:#444">English</div>
<svg width="14" height="13" style="left:1381px;top:971px" viewBox="0 0 14 13"><polygon points="0.4,12 13,12 6.7,0.6" fill="#111"/></svg>
<!-- right column -->
<div class="t" style="left:1435px;top:158.2px;font-size:15.8px;color:#3d3d3d">Color</div>
<div class="inp" style="top:179px"></div>
<div class="t" style="left:1448.4px;top:189.2px;font-size:19.8px;color:#333">black</div>
<div class="t" style="left:1435px;top:233px;font-size:15.8px;letter-spacing:0.18px;color:#3d3d3d">Original Price</div>
<div class="inp" style="top:254px"></div>
<div class="t" style="left:1448.4px;top:262.3px;font-size:20.2px;color:#333">19.99</div>
<div class="t" style="left:1435px;top:308.2px;font-size:15.8px;color:#3d3d3d">Sale Price</div>
<div class="inp" style="top:329px;border-color:#b3456b"></div>
<div class="t" style="left:1448.4px;top:337.5px;font-size:20.2px;color:#333">9.99</div>
<div class="abs" style="left:1489.6px;top:337.3px;width:1.3px;height:21.6px;background:#222"></div>
</div>

<div id="botstrip" class="abs"></div>
<svg width="12" height="12" style="left:1868px;top:986px;z-index:51" viewBox="0 0 12 12"><path d="M12,0 V12 H0 V9.2 Q9,9.6 12,0 Z" fill="#23232b"/></svg>
</body>
</html>
